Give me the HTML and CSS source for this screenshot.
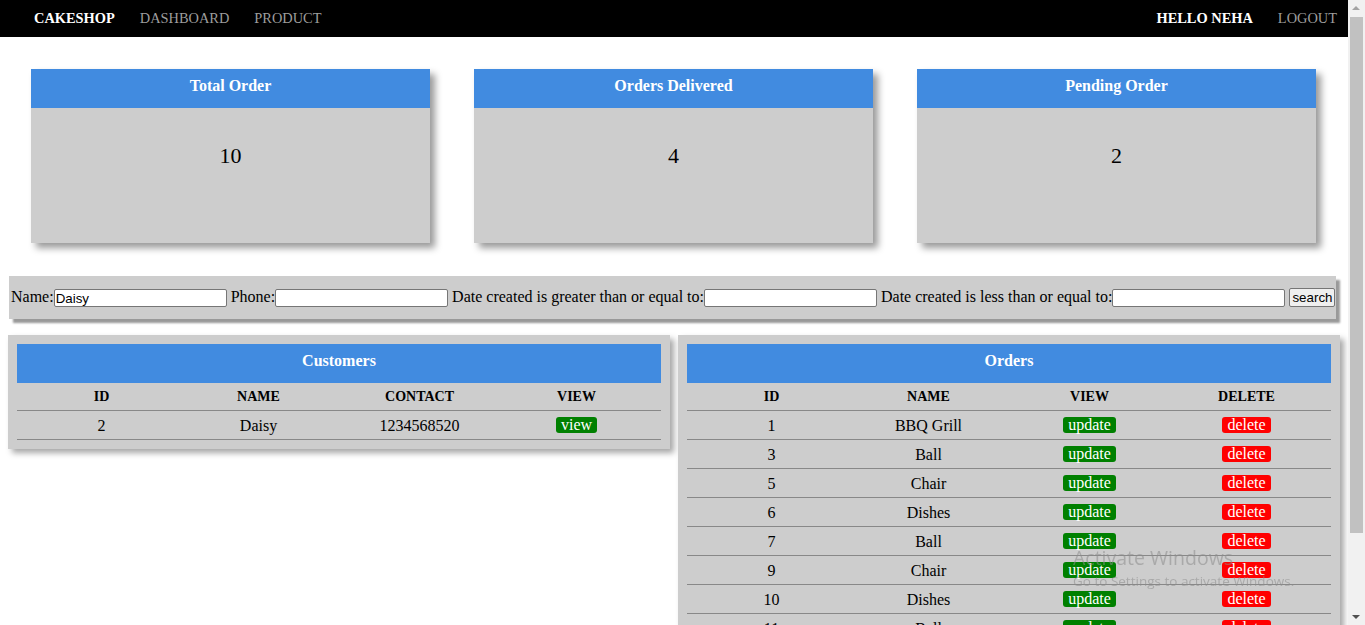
FILE: index.html
```html
<!DOCTYPE html>
<html lang="en">
<head>
<meta charset="utf-8">
<title>Cakeshop Dashboard</title>
<link rel="stylesheet" href="styles.css">
</head>
<body>
<nav class="navbar">
  <a class="brand" href="#">CAKESHOP</a>
  <a class="nav-link" href="#">DASHBOARD</a>
  <a class="nav-link" href="#">PRODUCT</a>
  <div class="nav-right">
    <span class="hello">HELLO NEHA</span>
    <a class="nav-link" href="#">LOGOUT</a>
  </div>
</nav>

<main class="main">
  <section class="stats">
    <div class="stat-card">
      <div class="stat-head">Total Order</div>
      <div class="stat-body">10</div>
    </div>
    <div class="stat-card">
      <div class="stat-head">Orders Delivered</div>
      <div class="stat-body">4</div>
    </div>
    <div class="stat-card">
      <div class="stat-head">Pending Order</div>
      <div class="stat-body">2</div>
    </div>
  </section>

  <form class="filter">Name:<input class="field" type="text" value="Daisy"> Phone:<input class="field" type="text"> Date created is greater than or equal to:<input class="field" type="text"> Date created is less than or equal to:<input class="field" type="text"> <button class="search" type="button">search</button></form>

  <section class="tables">
    <div class="panel">
      <div class="panel-title">Customers</div>
      <table class="data">
        <thead>
          <tr><th>ID</th><th>NAME</th><th>CONTACT</th><th>VIEW</th></tr>
        </thead>
        <tbody>
          <tr><td>2</td><td>Daisy</td><td>1234568520</td><td><span class="btn btn-green">view</span></td></tr>
        </tbody>
      </table>
    </div>
    <div class="panel">
      <div class="panel-title">Orders</div>
      <table class="data">
        <thead>
          <tr><th>ID</th><th>NAME</th><th>VIEW</th><th>DELETE</th></tr>
        </thead>
        <tbody>
          <tr><td>1</td><td>BBQ Grill</td><td><span class="btn btn-green">update</span></td><td><span class="btn btn-red">delete</span></td></tr>
          <tr><td>3</td><td>Ball</td><td><span class="btn btn-green">update</span></td><td><span class="btn btn-red">delete</span></td></tr>
          <tr><td>5</td><td>Chair</td><td><span class="btn btn-green">update</span></td><td><span class="btn btn-red">delete</span></td></tr>
          <tr><td>6</td><td>Dishes</td><td><span class="btn btn-green">update</span></td><td><span class="btn btn-red">delete</span></td></tr>
          <tr><td>7</td><td>Ball</td><td><span class="btn btn-green">update</span></td><td><span class="btn btn-red">delete</span></td></tr>
          <tr><td>9</td><td>Chair</td><td><span class="btn btn-green">update</span></td><td><span class="btn btn-red">delete</span></td></tr>
          <tr><td>10</td><td>Dishes</td><td><span class="btn btn-green">update</span></td><td><span class="btn btn-red">delete</span></td></tr>
          <tr><td>11</td><td>Ball</td><td><span class="btn btn-green">update</span></td><td><span class="btn btn-red">delete</span></td></tr>
          <tr><td>12</td><td>Chair</td><td><span class="btn btn-green">update</span></td><td><span class="btn btn-red">delete</span></td></tr>
          <tr><td>13</td><td>Dishes</td><td><span class="btn btn-green">update</span></td><td><span class="btn btn-red">delete</span></td></tr>
        </tbody>
      </table>
    </div>
  </section>
</main>

<div class="watermark">
  <div class="wm-title">Activate Windows</div>
  <div class="wm-sub">Go to Settings to activate Windows.</div>
</div>

<div class="scrollbar" aria-hidden="true">
  <div class="sb-up"></div>
  <div class="sb-thumb"></div>
  <div class="sb-down"></div>
</div>
</body>
</html>
```

FILE: styles.css
```css
html::-webkit-scrollbar {
  display: none;
}

body {
  margin: 0;
  padding-right: 17px;
  font-family: "Liberation Serif", "Times New Roman", serif;
  font-size: 16px;
  color: #000;
  background: #fff;
}

/* NAVBAR */
.navbar {
  height: 37px;
  background: #000;
  display: flex;
  align-items: center;
  padding: 0 11px 0 34px;
  font-size: 14.4px;
}
.navbar a {
  text-decoration: none;
}
.brand {
  color: #fff;
  font-weight: bold;
}
.nav-link {
  color: #9d9d9d;
  margin-left: 25px;
}
.nav-right {
  margin-left: auto;
  display: flex;
  align-items: center;
}
.hello {
  color: #fff;
  font-weight: bold;
}

/* MAIN */
.main {
  padding: 32px 8px 0 8px;
}

.stats {
  display: flex;
  gap: 44px;
  padding: 0 23px;
}
.stat-card {
  flex: 0 0 399px;
  background: #cdcdcd;
  box-shadow: 5px 5px 7px rgba(0, 0, 0, 0.4);
}
.stat-head {
  height: 39px;
  box-sizing: border-box;
  padding-top: 8px;
  background: #418be0;
  color: #fff;
  font-weight: bold;
  text-align: center;
  line-height: 18px;
}
.stat-body {
  height: 135px;
  box-sizing: border-box;
  padding-top: 35px;
  text-align: center;
  font-size: 22px;
  line-height: 26px;
}

/* FILTER */
.filter {
  margin: 33px 4px 0 1px;
  background: #cdcdcd;
  padding: 11px 2px 12px 2px;
  height: 20px;
  line-height: 20px;
  white-space: nowrap;
  box-shadow: 4px 4px 2px #999;
}
.field {
  width: 173px;
  height: 18px;
  box-sizing: border-box;
  border: 1px solid #767676;
  border-radius: 2px;
  padding: 0 1px;
  margin: 0;
  font-family: "Liberation Sans", Arial, sans-serif;
  font-size: 13.33px;
  vertical-align: top;
  margin-top: 2px;
  background: #fff;
}
.search {
  height: 19px;
  box-sizing: border-box;
  border: 1px solid #767676;
  border-radius: 2px;
  background: #efefef;
  padding: 0 2px;
  margin: 1px 0 0 0;
  font-family: "Liberation Sans", Arial, sans-serif;
  font-size: 13.33px;
  line-height: 15px;
  vertical-align: top;
}

/* TABLES */
.tables {
  display: flex;
  align-items: flex-start;
  gap: 8px;
  margin-top: 16px;
  padding-bottom: 8px;
}
.panel {
  flex: 0 0 662px;
  box-sizing: border-box;
  background: #cdcdcd;
  padding: 9px;
  box-shadow: 4px 4px 6px rgba(0, 0, 0, 0.35);
}
.panel-title {
  height: 39px;
  box-sizing: border-box;
  padding-top: 8px;
  background: #418be0;
  color: #fff;
  font-weight: bold;
  text-align: center;
  line-height: 18px;
}
.data {
  width: 100%;
  border-collapse: collapse;
  table-layout: fixed;
}
.data th {
  font-size: 14px;
  font-weight: bold;
  padding: 5px 0 4px;
  height: 18px;
  line-height: 18px;
  text-align: center;
  border-bottom: 1px solid #888;
}
.data td {
  padding: 6px 0 4px;
  height: 18px;
  line-height: 18px;
  text-align: center;
  border-bottom: 1px solid #888;
}
.data th:first-child,
.data td:first-child {
  padding-left: 8px;
}
.data th:last-child,
.data td:last-child {
  padding-right: 8px;
}
.btn {
  display: inline-block;
  padding: 0 5px;
  line-height: 16px;
  height: 16px;
  border-radius: 3px;
  color: #fff;
  vertical-align: top;
}
.btn-green {
  background: #008000;
}
.btn-red {
  background: #ff0000;
}

/* WINDOWS WATERMARK OVERLAY */
.watermark {
  position: fixed;
  left: 1073px;
  top: 545px;
  font-family: "Open Sans", "Noto Sans", sans-serif;
  color: rgba(140, 140, 140, 0.55);
  pointer-events: none;
}
.wm-title {
  font-size: 19.5px;
  line-height: 26px;
}
.wm-sub {
  font-size: 13.5px;
  line-height: 20px;
}

/* FAKE WINDOWS SCROLLBAR (overlay) */
.scrollbar {
  position: fixed;
  top: 0;
  right: 0;
  bottom: 0;
  width: 17px;
  background: #f1f1f1;
}
.sb-up {
  position: absolute;
  top: 6px;
  left: 4px;
  width: 0;
  height: 0;
  border-left: 4.5px solid transparent;
  border-right: 4.5px solid transparent;
  border-bottom: 4.5px solid #a3a3a3;
}
.sb-thumb {
  position: absolute;
  top: 17px;
  left: 2px;
  width: 13px;
  height: 516px;
  background: #c1c1c1;
}
.sb-down {
  position: absolute;
  bottom: 6px;
  left: 4px;
  width: 0;
  height: 0;
  border-left: 4.5px solid transparent;
  border-right: 4.5px solid transparent;
  border-top: 4.5px solid #505050;
}
```
